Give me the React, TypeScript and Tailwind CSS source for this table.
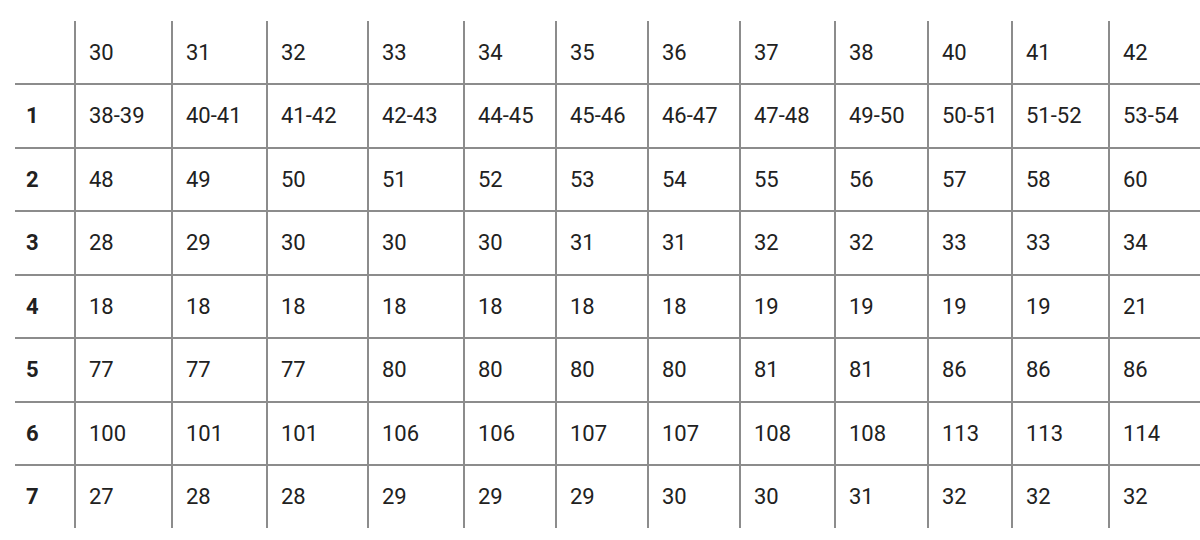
const header = ["30", "31", "32", "33", "34", "35", "36", "37", "38", "40", "41", "42"];

const rows: { label: string; values: string[] }[] = [
  { label: "1", values: ["38-39", "40-41", "41-42", "42-43", "44-45", "45-46", "46-47", "47-48", "49-50", "50-51", "51-52", "53-54"] },
  { label: "2", values: ["48", "49", "50", "51", "52", "53", "54", "55", "56", "57", "58", "60"] },
  { label: "3", values: ["28", "29", "30", "30", "30", "31", "31", "32", "32", "33", "33", "34"] },
  { label: "4", values: ["18", "18", "18", "18", "18", "18", "18", "19", "19", "19", "19", "21"] },
  { label: "5", values: ["77", "77", "77", "80", "80", "80", "80", "81", "81", "86", "86", "86"] },
  { label: "6", values: ["100", "101", "101", "106", "106", "107", "107", "108", "108", "113", "113", "114"] },
  { label: "7", values: ["27", "28", "28", "29", "29", "29", "30", "30", "31", "32", "32", "32"] },
];

const App = () => {
  return (
    <div className="h-[540px] w-[1200px] overflow-hidden bg-white pl-[15px] pt-[21px] font-['Roboto',sans-serif] text-[22px] text-[#212121]">
      <div className="grid grid-cols-[59px_97px_95px_101px_96px_92px_92px_92px_95px_93px_84px_97px_1fr] grid-rows-[62px_repeat(7,63.5px)]">
        {/* header row */}
        <div />
        {header.map((h, i) => (
          <div key={i} className="flex items-center border-l-2 border-[#8c8c8c] pl-[13px]">
            {h}
          </div>
        ))}

        {rows.map((row) => (
          <div key={row.label} className="contents">
            <div className="flex items-center border-t-2 border-[#8c8c8c] pl-[11px] font-bold">
              {row.label}
            </div>
            {row.values.map((v, i) => (
              <div key={i} className="flex items-center border-l-2 border-t-2 border-[#8c8c8c] pl-[13px]">
                {v}
              </div>
            ))}
          </div>
        ))}
      </div>
    </div>
  );
};

export default App;
